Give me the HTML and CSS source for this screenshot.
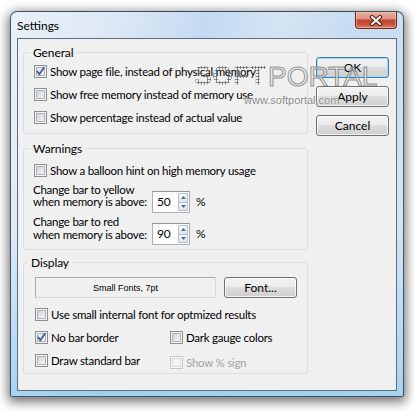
FILE: index.html
```html
<!DOCTYPE html>
<html>
<head>
<meta charset="utf-8">
<title>Settings</title>
<link rel="stylesheet" href="styles.css">
</head>
<body>
<div class="window">
  <div class="titlebar">
    <span class="title">Settings</span>
    <span class="close">
      <svg width="14" height="11" viewBox="0 0 14 11">
        <path d="M3 2 L11 9 M11 2 L3 9" stroke="#4a1c16" stroke-width="4.2" stroke-linecap="round" fill="none"/>
        <path d="M3 2 L11 9 M11 2 L3 9" stroke="#f4f4f4" stroke-width="2.2" stroke-linecap="round" fill="none"/>
      </svg>
    </span>
  </div>
  <div class="client">
    <div class="groups">
      <fieldset class="group general">
        <legend>General</legend>
        <div class="check"><span class="cb on"><svg viewBox="0 0 13 13"><path d="M3.2 6.4 L5.4 9.2 L9.8 2.8" /></svg></span>Show page file, instead of physical memory</div>
        <div class="check"><span class="cb"></span>Show free memory instead of memory use</div>
        <div class="check"><span class="cb"></span>Show percentage instead of actual value</div>
      </fieldset>
      <fieldset class="group warnings">
        <legend>Warnings</legend>
        <div class="check"><span class="cb"></span>Show a balloon hint on high memory usage</div>
        <div class="limit yellow">
          <div class="limit-label">Change bar to yellow<br>when memory is above:</div>
          <div class="spin"><span class="val">50</span><span class="arrows"><span class="up"><svg width="5" height="3" viewBox="0 0 5 3"><path d="M0 3 L2.5 0 L5 3Z"/></svg></span><span class="down"><svg width="5" height="3" viewBox="0 0 5 3"><path d="M0 0 L2.5 3 L5 0Z"/></svg></span></span></div>
          <span class="pct">%</span>
        </div>
        <div class="limit red">
          <div class="limit-label">Change bar to red<br>when memory is above:</div>
          <div class="spin"><span class="val">90</span><span class="arrows"><span class="up"><svg width="5" height="3" viewBox="0 0 5 3"><path d="M0 3 L2.5 0 L5 3Z"/></svg></span><span class="down"><svg width="5" height="3" viewBox="0 0 5 3"><path d="M0 0 L2.5 3 L5 0Z"/></svg></span></span></div>
          <span class="pct">%</span>
        </div>
      </fieldset>
      <fieldset class="group display">
        <legend>Display</legend>
        <div class="font-row">
          <div class="fontbox">Small Fonts, 7pt</div>
          <button class="btn">Font...</button>
        </div>
        <div class="opts">
          <div class="check wide"><span class="cb"></span>Use small internal font for optmized results</div>
          <div class="check"><span class="cb on"><svg viewBox="0 0 13 13"><path d="M3.2 6.4 L5.4 9.2 L9.8 2.8" /></svg></span>No bar border</div>
          <div class="check"><span class="cb"></span>Dark gauge colors</div>
          <div class="check"><span class="cb"></span>Draw standard bar</div>
          <div class="check disabled shift"><span class="cb"></span>Show % sign</div>
        </div>
      </fieldset>
    </div>
    <div class="buttons">
      <button class="btn default">OK</button>
      <button class="btn">Apply</button>
      <button class="btn">Cancel</button>
    </div>
  </div>
</div>
<div class="watermark">
  <span class="wm-soft">SOFT</span>
  <span class="wm-portal">PORTAL</span>
  <span class="wm-url">www.softportal.com</span>
</div>
</body>
</html>
```

FILE: styles.css
```css
* { box-sizing: border-box; }
html, body { margin: 0; padding: 0; }
body {
  width: 414px;
  height: 412px;
  background: #ffffff;
  font-family: Lato, "Noto Sans", sans-serif;
  font-size: 11.5px;
  letter-spacing: -0.25px;
  color: #000;
  position: relative;
  overflow: hidden;
}

.window {
  margin: 11px 0 0 10px;
  width: 394px;
  height: 386px;
  border: 1px solid rgba(35, 45, 60, 0.8);
  border-radius: 7px 7px 2px 2px;
  background:
    linear-gradient(to bottom, rgba(255,255,255,0) 55%, rgba(130,200,240,0.6) 100%),
    linear-gradient(105deg, #e8f0f8 0%, #dce8f5 22%, #c4daf2 40%, #d4e4f4 55%, #c6dbf1 72%, #dbe8f5 100%);
  box-shadow: 0 3px 11px 2px rgba(0, 0, 0, 0.55);
  display: flex;
  flex-direction: column;
}

.titlebar {
  height: 26px;
  display: flex;
  align-items: flex-start;
  padding-left: 6px;
}
.title {
  padding-top: 6px;
  line-height: 15px;
  font-size: 12px;
  letter-spacing: 0;
}
.close {
  margin-left: auto;
  margin-right: 6px;
  width: 42px;
  height: 17px;
  border: 1px solid #6e2a20;
  border-top: none;
  border-radius: 0 0 4px 4px;
  background: linear-gradient(to bottom, #eab0a2 0%, #df9383 40%, #c5452f 52%, #c55038 75%, #d9876c 100%);
  box-shadow: inset 0 0 0 1px rgba(255, 210, 200, 0.45);
  display: flex;
  align-items: center;
  justify-content: center;
}
.close svg { display: block; }

.client {
  margin: 0 6px 5px;
  height: 353px;
  border: 1px solid #5f6d7c;
  background: #f0f0f0;
  display: flex;
  align-items: flex-start;
  gap: 8px;
  padding: 6px 0 0 5px;
}

.groups { display: flex; flex-direction: column; width: 285px; }

.group {
  margin: 0;
  padding: 0 0 4px;
  border: 1px solid #d5dfe5;
  border-radius: 3px;
  width: 285px;
  min-width: 0;
}
.group legend {
  margin-left: 6px;
  padding: 0 3px;
  line-height: 15px;
  font-size: 12px;
  letter-spacing: -0.1px;
}
.display legend { margin-left: 4px; }

.check {
  display: flex;
  align-items: center;
  height: 23px;
  padding-left: 10px;
  white-space: nowrap;
}
.cb {
  width: 13px;
  height: 13px;
  flex: none;
  margin-right: 3px;
  border: 1px solid #8e8f8f;
  background: linear-gradient(135deg, #c4c9cf 0%, #e6e8ea 55%, #f6f6f6 100%);
  box-shadow: inset 0 0 0 1px #f4f4f4, inset 0 0 0 2px #aeb3b9;
  position: relative;
}
.cb svg {
  position: absolute;
  left: -1px;
  top: -1px;
  width: 13px;
  height: 13px;
}
.cb svg path {
  fill: none;
  stroke: #4a5f97;
  stroke-width: 1.9;
  stroke-linecap: round;
  stroke-linejoin: round;
}
.cb.on { background: linear-gradient(135deg, #dfe3e8 0%, #eef0f2 60%, #f8f8f8 100%); }
.disabled { color: #a3a3a3; }
.disabled .cb {
  border-color: #c8c8c8;
  background: #f4f4f4;
  box-shadow: inset 0 0 0 1px #f7f7f7, inset 0 0 0 2px #dadada;
}
.shift { padding-top: 3px; }

.warnings { margin-top: 7px; }
.warnings .check { margin-top: 3px; }

.limit {
  display: flex;
  align-items: flex-end;
  padding-left: 9px;
  margin-top: 2px;
}
.limit-label {
  width: 119px;
  line-height: 12px;
  margin-bottom: 5px;
  white-space: nowrap;
}
.limit.red .limit-label { line-height: 13px; margin-bottom: 4px; }
.spin {
  width: 38px;
  height: 22px;
  display: flex;
  border: 1px solid #abadb3;
  border-top-color: #8f939b;
  background: #fff;
}
.spin .val {
  flex: 1;
  padding-left: 4px;
  line-height: 20px;
  font-size: 12px;
}
.arrows {
  width: 10px;
  margin: 1px 1px 1px 0;
  display: flex;
  flex-direction: column;
}
.arrows span {
  flex: 1;
  display: flex;
  align-items: center;
  justify-content: center;
  border: 1px solid #b9c0ca;
  background: linear-gradient(#f6f8fa, #dfe5ec);
}
.arrows .down { border-top: none; }
.arrows svg { display: block; }
.arrows svg path { fill: #4f6aa0; }
.pct {
  margin-left: 6px;
  height: 22px;
  line-height: 22px;
  font-size: 12px;
}

.display { margin-top: 5px; padding-bottom: 1px; }
.font-row {
  display: flex;
  gap: 8px;
  margin-top: 7px;
  padding-left: 11px;
}
.fontbox {
  width: 181px;
  height: 21px;
  border: 1px solid #a9a9a9;
  border-right-color: #d8d8d8;
  border-bottom-color: #d8d8d8;
  background: #f0f0f0;
  font-family: "Liberation Sans", Arial, sans-serif;
  font-size: 9px;
  letter-spacing: 0;
  display: flex;
  align-items: center;
  justify-content: center;
}
.opts {
  display: grid;
  grid-template-columns: 135px auto;
  margin-top: 5px;
  padding-left: 11px;
}
.opts .check { padding-left: 0; }
.opts .wide { grid-column: 1 / 3; }

.btn {
  width: 73px;
  height: 21px;
  padding: 0;
  font-family: inherit;
  font-size: 12px;
  letter-spacing: 0;
  color: #000;
  border: 1px solid #707070;
  border-radius: 3px;
  background: linear-gradient(#f3f3f3 0%, #ebebeb 45%, #dddddd 50%, #cfcfcf 100%);
  box-shadow: inset 0 0 0 1px rgba(255, 255, 255, 0.75);
  line-height: 19px;
}
.btn.default {
  border-color: #3c7fb1;
  box-shadow: inset 0 0 0 1px #9ddcf8;
}
.buttons {
  display: flex;
  flex-direction: column;
  gap: 8px;
  margin-top: 12px;
}

.watermark {
  position: absolute;
  left: 0;
  top: 0;
  pointer-events: none;
  letter-spacing: 0;
}
.wm-soft {
  position: absolute;
  left: 194px;
  top: 63px;
  font-family: "Liberation Sans", Arial, sans-serif;
  font-weight: bold;
  font-size: 27px;
  line-height: 27px;
  color: transparent;
  background: radial-gradient(circle, rgba(105,105,105,1) 0.9px, rgba(255,255,255,0) 1.3px) 0 0 / 3px 3px;
  -webkit-background-clip: text;
  background-clip: text;
  white-space: nowrap;
}
.wm-portal {
  position: absolute;
  left: 268px;
  top: 63px;
  font-family: "Liberation Sans", Arial, sans-serif;
  font-size: 28px;
  line-height: 28px;
  color: rgba(235, 235, 235, 0.6);
  -webkit-text-stroke: 1px rgba(110, 110, 110, 0.75);
  white-space: nowrap;
}
.wm-url {
  position: absolute;
  left: 244px;
  top: 94px;
  font-family: "Liberation Sans", Arial, sans-serif;
  font-size: 11px;
  line-height: 13px;
  color: rgba(110, 110, 110, 0.85);
  text-shadow: 0 0 1px #fff, 0 0 1px #fff;
  white-space: nowrap;
}
```
